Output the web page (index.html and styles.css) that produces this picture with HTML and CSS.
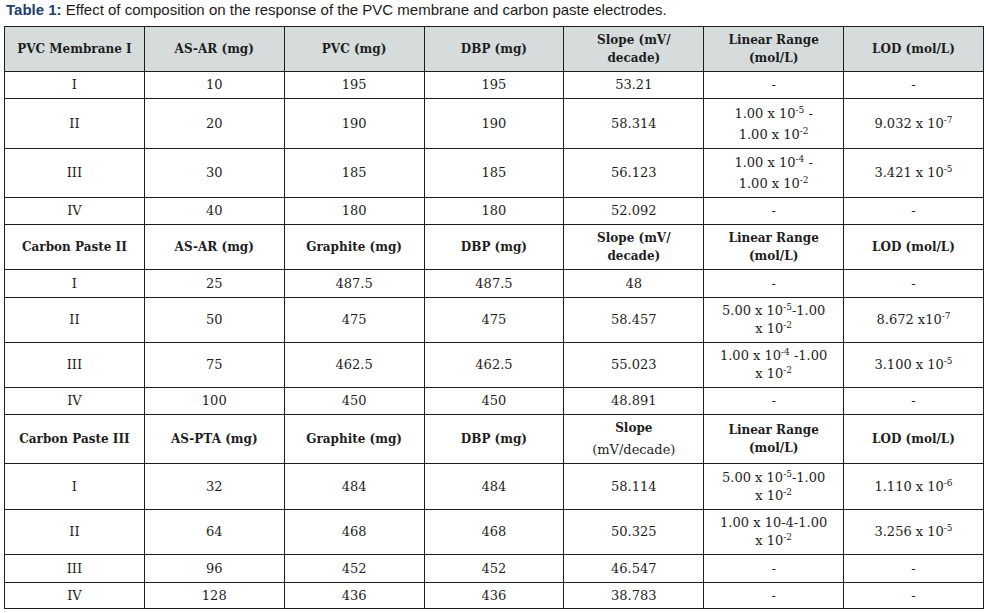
FILE: index.html
```html
<!DOCTYPE html>
<html>
<head>
<meta charset="utf-8">
<link rel="stylesheet" href="styles.css">
</head>
<body>
<div class="caption"><b>Table 1:</b> Effect of composition on the response of the PVC membrane and carbon paste electrodes.</div>
<table class="data">
  <tr class="h45 head">
    <th>PVC Membrane I</th><th>AS-AR (mg)</th><th>PVC (mg)</th><th>DBP (mg)</th>
    <th class="lh18">Slope (mV/<br>decade)</th><th class="lh18">Linear Range<br>(mol/L)</th><th>LOD (mol/L)</th>
  </tr>
  <tr class="h27"><td>I</td><td>10</td><td>195</td><td>195</td><td>53.21</td><td>-</td><td>-</td></tr>
  <tr class="h50"><td>II</td><td>20</td><td>190</td><td>190</td><td>58.314</td><td class="lh21">1.00 x 10<sup>-5</sup> -<br>1.00 x 10<sup>-2</sup></td><td>9.032 x 10<sup>-7</sup></td></tr>
  <tr class="h49"><td>III</td><td>30</td><td>185</td><td>185</td><td>56.123</td><td class="lh21">1.00 x 10<sup>-4</sup> -<br>1.00 x 10<sup>-2</sup></td><td>3.421 x 10<sup>-5</sup></td></tr>
  <tr class="h27"><td>IV</td><td>40</td><td>180</td><td>180</td><td>52.092</td><td>-</td><td>-</td></tr>
  <tr class="h45 sub">
    <th>Carbon Paste II</th><th>AS-AR (mg)</th><th>Graphite (mg)</th><th>DBP (mg)</th>
    <th class="lh18">Slope (mV/<br>decade)</th><th class="lh18">Linear Range<br>(mol/L)</th><th>LOD (mol/L)</th>
  </tr>
  <tr class="h28"><td>I</td><td>25</td><td>487.5</td><td>487.5</td><td>48</td><td>-</td><td>-</td></tr>
  <tr class="h45"><td>II</td><td>50</td><td>475</td><td>475</td><td>58.457</td><td class="lh18">5.00 x 10<sup>-5</sup>-1.00<br>x 10<sup>-2</sup></td><td>8.672 x10<sup>-7</sup></td></tr>
  <tr class="h45"><td>III</td><td>75</td><td>462.5</td><td>462.5</td><td>55.023</td><td class="lh18">1.00 x 10<sup>-4</sup> -1.00<br>x 10<sup>-2</sup></td><td>3.100 x 10<sup>-5</sup></td></tr>
  <tr class="h27"><td>IV</td><td>100</td><td>450</td><td>450</td><td>48.891</td><td>-</td><td>-</td></tr>
  <tr class="h49 sub">
    <th>Carbon Paste III</th><th>AS-PTA (mg)</th><th>Graphite (mg)</th><th>DBP (mg)</th>
    <th class="lh22">Slope<br><span class="reg">(mV/decade)</span></th><th class="lh18">Linear Range<br>(mol/L)</th><th>LOD (mol/L)</th>
  </tr>
  <tr class="h46"><td>I</td><td>32</td><td>484</td><td>484</td><td>58.114</td><td class="lh18">5.00 x 10<sup>-5</sup>-1.00<br>x 10<sup>-2</sup></td><td>1.110 x 10<sup>-6</sup></td></tr>
  <tr class="h45"><td>II</td><td>64</td><td>468</td><td>468</td><td>50.325</td><td class="lh18">1.00 x 10-4-1.00<br>x 10<sup>-2</sup></td><td>3.256 x 10<sup>-5</sup></td></tr>
  <tr class="h28"><td>III</td><td>96</td><td>452</td><td>452</td><td>46.547</td><td>-</td><td>-</td></tr>
  <tr class="h26"><td>IV</td><td>128</td><td>436</td><td>436</td><td>38.783</td><td>-</td><td>-</td></tr>
</table>
</body>
</html>
```

FILE: styles.css
```css
html, body {
  margin: 0;
  padding: 0;
  background: #ffffff;
}

.caption {
  font-family: "Liberation Sans", Arial, sans-serif;
  font-size: 15px;
  line-height: 20px;
  color: #1c1c1c;
  padding-left: 6px;
  white-space: nowrap;
}

.caption b {
  color: #233f6b;
}

.data {
  margin: 6px 0 0 4px;
  width: 980px;
  border-collapse: collapse;
  table-layout: fixed;
  font-family: "DejaVu Serif", "Liberation Serif", serif;
  color: #1e1e1e;
}

.data th,
.data td {
  border: 1px solid #1e1e1e;
  padding: 0;
  text-align: center;
  vertical-align: middle;
  white-space: nowrap;
}

.data th {
  font-size: 12px;
  font-weight: bold;
  line-height: 16px;
}

.data td {
  font-size: 13px;
  line-height: 16px;
}

.head th {
  background: #d6dcdc;
}

.reg {
  font-weight: normal;
  font-size: 13px;
}

.data sup {
  font-size: 9px;
  line-height: 0;
  vertical-align: 5px;
}

.data .lh18 { line-height: 18px; }
.data .lh21 { line-height: 21px; }
.data .lh22 { line-height: 22px; }

.h26 { height: 26px; }
.h27 { height: 27px; }
.h28 { height: 28px; }
.h45 { height: 45px; }
.h46 { height: 46px; }
.h49 { height: 49px; }
.h50 { height: 50px; }
```
